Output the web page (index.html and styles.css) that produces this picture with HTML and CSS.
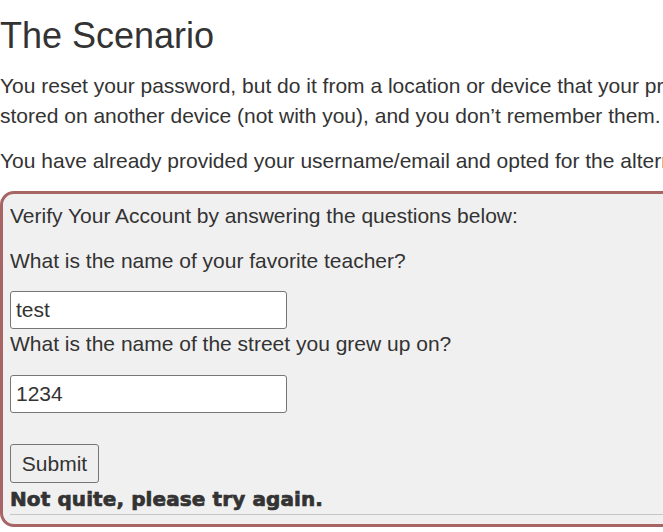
FILE: index.html
```html
<!DOCTYPE html>
<html lang="en">
<head>
<meta charset="utf-8">
<title>The Scenario</title>
<link rel="stylesheet" href="styles.css">
</head>
<body>
<main class="page">
  <h1 class="title">The Scenario</h1>
  <p class="text">You reset your password, but do it from a location or device that your provider has not seen before. Your recovery codes are stored on another device (not with you), and you don’t remember them.</p>
  <p class="text">You have already provided your username/email and opted for the alternate verification method.</p>
  <section class="verify">
    <p class="text">Verify Your Account by answering the questions below:</p>
    <p class="text">What is the name of your favorite teacher?</p>
    <input class="field" type="text" value="test">
    <p class="text question">What is the name of the street you grew up on?</p>
    <input class="field" type="text" value="1234">
    <div class="actions"><button class="submit" type="button">Submit</button></div>
    <div class="feedback">Not quite, please try again.</div>
    <hr class="rule">
  </section>
</main>
</body>
</html>
```
FILE: styles.css
```css
html, body {
  margin: 0;
  padding: 0;
  overflow: hidden;
  background: #fff;
}
.page {
  width: 1180px;
  font-family: "Liberation Sans", Arial, sans-serif;
  color: #333;
  font-size: 21px;
  line-height: 30px;
}
.title {
  margin: 15px 0 15px;
  font-size: 36px;
  line-height: 41px;
  font-weight: normal;
}
.text {
  margin: 15px 0;
}
.verify {
  background: #f0f0f0;
  border: 3px solid #a86565;
  border-radius: 14px;
  padding: 0 7px 9px;
  margin-top: 15px;
}
.verify .text:first-child {
  margin-top: 7px;
}
.question {
  margin-top: 0;
  margin-bottom: 16px;
}
.field {
  display: block;
  box-sizing: border-box;
  width: 277px;
  height: 38px;
  margin: 0;
  padding: 0 5px;
  border: 1px solid #767676;
  border-radius: 3px;
  background: #fff;
  font-family: "Liberation Sans", Arial, sans-serif;
  font-size: 21px;
  color: #333;
}
.actions {
  padding-top: 31px;
}
.submit {
  box-sizing: border-box;
  width: 89px;
  height: 39px;
  margin: 0;
  padding: 0;
  border: 1px solid #767676;
  border-radius: 3px;
  background: #efefef;
  font-family: "Liberation Sans", Arial, sans-serif;
  font-size: 21px;
  color: #333;
}
.feedback {
  margin-top: 1px;
  font-family: "DejaVu Sans", "Liberation Sans", sans-serif;
  font-weight: bold;
  font-size: 20px;
  line-height: 30px;
  letter-spacing: 0.1px;
  -webkit-text-stroke: 0.7px #333;
}
.rule {
  margin: 0;
  border: 0;
  border-top: 1px solid #c6c6c6;
}
```
